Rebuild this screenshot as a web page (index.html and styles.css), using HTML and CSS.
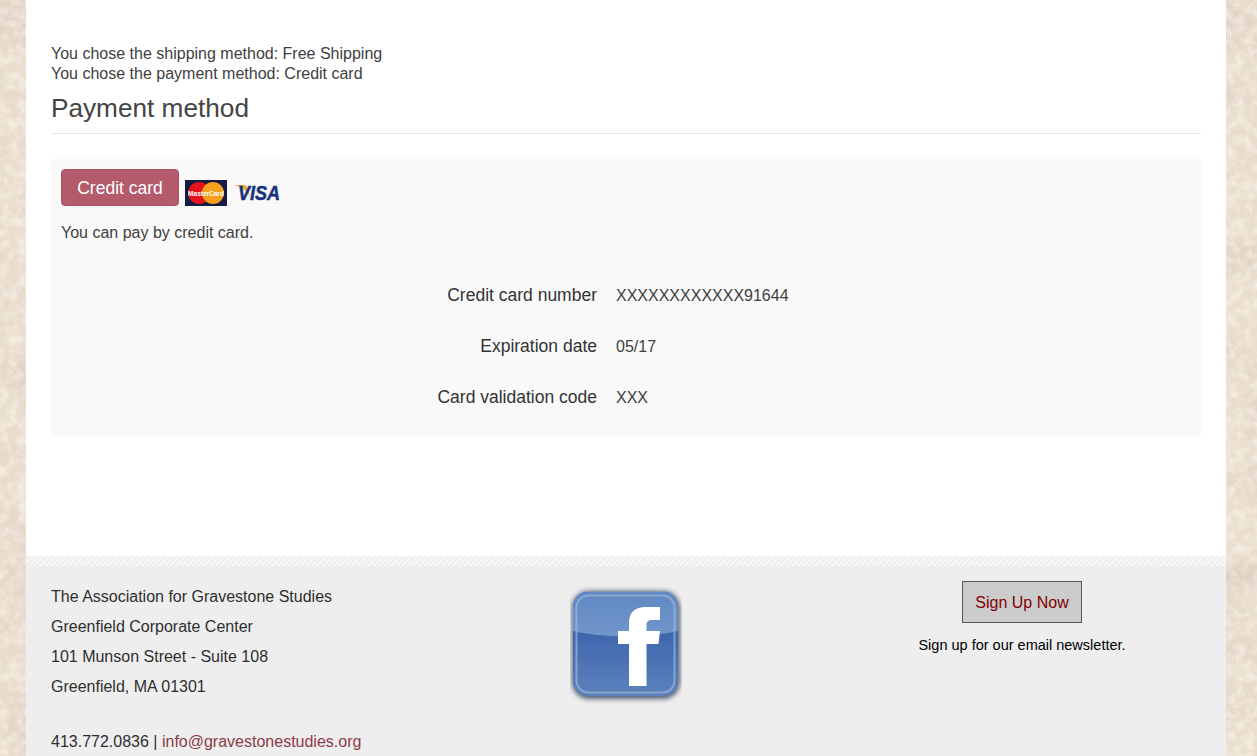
FILE: index.html
```html
<!DOCTYPE html>
<html lang="en">
<head>
  <meta charset="UTF-8">
  <title>Payment method - The Association for Gravestone Studies</title>
  <link rel="stylesheet" href="styles.css">
</head>
<body>
  <!-- parchment texture behind the page -->
  <svg class="paper" width="1257" height="756" aria-hidden="true">
    <filter id="paper-blotch" x="0" y="0" width="100%" height="100%">
      <feTurbulence type="fractalNoise" baseFrequency="0.012 0.018" numOctaves="3" seed="4"/>
      <feColorMatrix type="matrix" values="0 0 0 0 0.70  0 0 0 0 0.60  0 0 0 0 0.52  1.5 0 0 0 -0.55"/>
    </filter>
    <filter id="paper-grain" x="0" y="0" width="100%" height="100%">
      <feTurbulence type="fractalNoise" baseFrequency="0.11" numOctaves="3" seed="9"/>
      <feColorMatrix type="matrix" values="0 0 0 0 1  0 0 0 0 0.97  0 0 0 0 0.88  1.2 0 0 0 -0.46"/>
    </filter>
    <rect width="1257" height="756" fill="#eadfcf"/>
    <rect width="1257" height="756" filter="url(#paper-blotch)"/>
    <rect width="1257" height="756" filter="url(#paper-grain)"/>
  </svg>

  <div class="page">
    <main class="content">
      <p class="chosen">You chose the shipping method: Free Shipping<br>You chose the payment method: Credit card</p>
      <h2 class="section-title">Payment method</h2>

      <div class="payment-box">
        <div class="method-row">
          <a class="method-btn" href="#">Credit card</a>
          <svg class="card-logo" width="42" height="26" viewBox="0 0 42 26" aria-hidden="true">
            <rect width="42" height="26" fill="#141c44"/>
            <circle cx="14" cy="13" r="11" fill="#e3131b"/>
            <circle cx="28" cy="13" r="11" fill="#f5a11c"/>
            <text class="mc-text" x="21" y="15.500" text-anchor="middle">MasterCard</text>
          </svg>
          <svg class="card-logo" width="48" height="22" viewBox="0 0 48 22" aria-hidden="true">
            <path d="M0 3h10c2 0 3 1 3.500 2.500l2.500 9C13 9 7 5 0 3z" fill="#e8a93f"/>
            <text class="visa-text" transform="translate(4 18) scale(0.86 1)">VISA</text>
          </svg>
        </div>
        <p class="method-note">You can pay by credit card.</p>

        <div class="card-fields">
          <div class="field-label">Credit card number</div>
          <div class="field-value">XXXXXXXXXXXX91644</div>
          <div class="field-label">Expiration date</div>
          <div class="field-value">05/17</div>
          <div class="field-label">Card validation code</div>
          <div class="field-value">XXX</div>
        </div>
      </div>
    </main>

    <footer class="site-footer">
      <div class="address">
        <p>The Association for Gravestone Studies</p>
        <p>Greenfield Corporate Center</p>
        <p>101 Munson Street - Suite 108</p>
        <p>Greenfield, MA 01301</p>
        <p class="contact">413.772.0836 | <a href="#">info@gravestonestudies.org</a></p>
      </div>

      <div class="social">
        <svg width="112" height="120" viewBox="0 0 112 120" aria-label="Facebook">
          <defs>
            <linearGradient id="fb-bottom" x1="0" y1="0" x2="0" y2="1">
              <stop offset="0.35" stop-color="#3d63ad"/>
              <stop offset="1" stop-color="#5d83bd"/>
            </linearGradient>
            <linearGradient id="fb-top" x1="0" y1="0" x2="0" y2="1">
              <stop offset="0" stop-color="#6189c3"/>
              <stop offset="1" stop-color="#7096ca"/>
            </linearGradient>
            <filter id="fb-shadow" x="-15%" y="-15%" width="130%" height="130%">
              <feGaussianBlur stdDeviation="2.500"/>
            </filter>
          </defs>
          <rect x="2" y="6" width="108" height="108" rx="17" fill="#2b3a58" opacity="0.8" filter="url(#fb-shadow)"/>
          <rect x="3" y="7" width="105" height="104" rx="15" fill="url(#fb-bottom)"/>
          <path d="M3 46V22A15 15 0 0 1 18 7h75a15 15 0 0 1 15 15v24c-30 7-75 7-105 0z" fill="url(#fb-top)"/>
          <rect x="6.500" y="10.500" width="98" height="97" rx="12" fill="none" stroke="#9db7dc" stroke-width="2" opacity="0.7"/>
          <path d="M59 101V59H48V46h11V38c0-11 6-16 17-16h14v13h-8c-4 0-5.500 2-5.500 5v6H90l-1.500 13H76.500V101z" fill="#fff"/>
        </svg>
      </div>

      <div class="newsletter">
        <a class="signup-btn" href="#">Sign Up Now</a>
        <p>Sign up for our email newsletter.</p>
      </div>
    </footer>
  </div>
</body>
</html>
```

FILE: styles.css
```css
html, body {
  height: 756px;
  overflow: hidden;
}

body {
  margin: 0;
  color: #404040;
  font-family: "Liberation Sans", Arial, sans-serif;
  font-size: 16px;
  line-height: 20px;
}

p {
  margin: 0;
}

a {
  text-decoration: none;
}

.paper {
  position: fixed;
  top: 0;
  left: 0;
  z-index: -1;
}

.page {
  width: 1200px;
  margin-left: 26px;
  background: #fff;
}

.content {
  height: 556px;
  box-sizing: border-box;
  padding: 44px 25px 0;
}

.section-title {
  margin: 0 0 25px;
  padding: 6px 0 7px;
  border-bottom: 1px solid #e5e5e5;
  color: #444;
  font-size: 26.200px;
  font-weight: normal;
  line-height: 36px;
}

.payment-box {
  height: 277px;
  box-sizing: border-box;
  padding: 10px;
  background: #f9f9f9;
}

.method-row {
  display: flex;
  align-items: flex-start;
  height: 38px;
}

.method-btn {
  box-sizing: border-box;
  width: 118px;
  height: 37px;
  border: 1px solid #ab5263;
  border-radius: 4px;
  background: #b35a6b;
  color: #fff;
  font-size: 17.500px;
  line-height: 37px;
  text-align: center;
}

.card-logo {
  margin: 11px 0 0 6px;
  overflow: visible;
}

.card-logo + .card-logo {
  margin: 13px 0 0 7px;
}

.mc-text {
  fill: #fff;
  font-size: 6.500px;
  font-weight: bold;
}

.visa-text {
  fill: #16307f;
  stroke: #16307f;
  stroke-width: 0.5px;
  font-size: 21px;
  font-style: italic;
  font-weight: bold;
}

.method-note {
  margin-top: 16px;
}

.card-fields {
  display: grid;
  grid-template-columns: 536px 1fr;
  grid-auto-rows: 51.400px;
  column-gap: 19px;
  align-items: center;
  margin-top: 26px;
}

.field-label {
  color: #333;
  font-size: 17.500px;
  text-align: right;
}

.field-value {
  padding-top: 2px;
}

.site-footer {
  display: grid;
  grid-template-columns: 358px 1fr 358px;
  height: 200px;
  box-sizing: border-box;
  padding: 15px 25px 0;
  border-top: 10px solid transparent;
  background-color: #eee;
  background-image: repeating-linear-gradient(135deg, #f7f7f7 0, #f7f7f7 2px, #eee 2px, #eee 4px);
  background-size: 100% 10px;
  background-repeat: no-repeat;
  background-clip: border-box;
  background-origin: border-box;
  color: #2e2e2e;
}

.address {
  padding-top: 1px;
}

.address p {
  line-height: 30px;
}

.address .contact {
  margin-top: 25px;
}

.address a {
  color: #8c3b48;
}

.social {
  display: flex;
  justify-content: center;
  padding-top: 4px;
}

.newsletter {
  text-align: center;
  color: #000;
  font-size: 14.500px;
}

.signup-btn {
  display: block;
  box-sizing: border-box;
  width: 120px;
  height: 42px;
  margin: 0 auto 12px;
  border: 1px solid #555;
  background: #ccc;
  color: #800000;
  font-size: 16px;
  line-height: 42px;
}
```
